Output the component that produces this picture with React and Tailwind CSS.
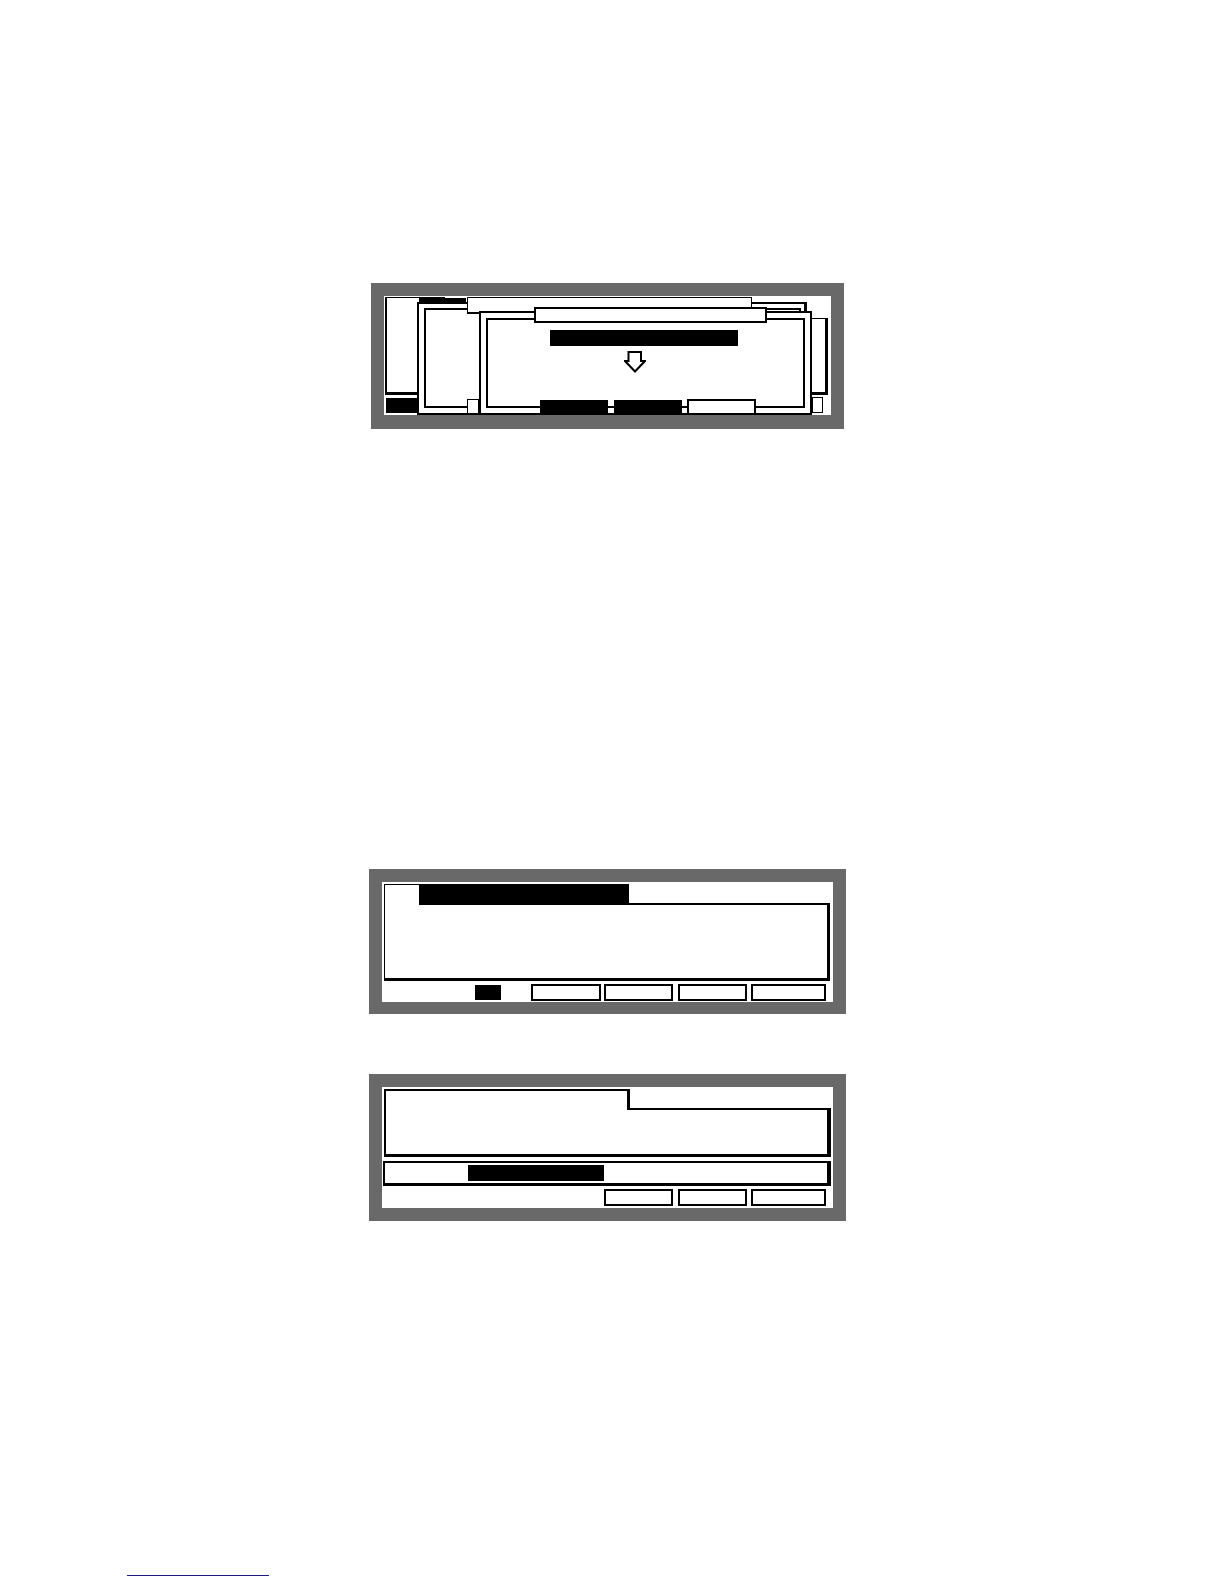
import React from "react";

// Outlined "down" arrow used in the transfer dialog
const DownArrow = () => (
  <svg width="22" height="22" viewBox="0 0 22 22" className="absolute left-[240px] top-[55px]">
    <path d="M4.5 1 H17 V10 H21 L11 20.5 L1 10 H4.5 Z" fill="white" stroke="black" strokeWidth="2" strokeLinejoin="miter" />
  </svg>
);

const StackScreen = () => (
  <div className="ml-[371px] mt-[283px] h-[146px] w-[473px] bg-[#696969] pl-[13px] pt-[13px]">
    <div className="relative h-[119px] w-[447px] overflow-hidden bg-white">
      {/* windows further back */}
      <div className="absolute left-[1px] top-[1px] h-[98px] w-[60px] border-l-2 border-t border-b-[3px] border-black bg-white" />
      <div className="absolute left-[35px] top-[2px] h-[4px] w-[47px] bg-black" />
      <div className="absolute left-[396px] top-[22px] h-[77px] w-[48px] border border-r-[3px] border-b-[3px] border-black bg-white" />
      <div className="absolute left-[2px] top-[102px] h-[15px] w-[31px] bg-black" />
      <div className="absolute left-[428px] top-[101px] h-[16px] w-[11px] border border-black bg-white" />

      {/* middle window */}
      <div className="absolute left-[33px] top-[6px] h-[113px] w-[390px] border-2 border-r-[3px] border-black bg-white">
        <div className="ml-[5px] mt-[4px] h-[100px] w-[377px] border-2 border-black" />
      </div>
      <div className="absolute left-[83px] top-[103px] h-[15px] w-[12px] border border-black bg-white" />
      <div className="absolute left-[83px] top-[1px] h-[17px] w-[285px] border border-b-2 border-black bg-white" />

      {/* front window */}
      <div className="absolute left-[95px] top-[15px] h-[104px] w-[333px] border-2 border-black bg-white">
        <div className="ml-[5px] mt-[5px] h-[90px] w-[319px] border-2 border-black" />
      </div>
      <div className="absolute left-[150px] top-[11px] h-[16px] w-[233px] border-2 border-black bg-white" />
      <div className="absolute left-[166px] top-[34px] h-[16px] w-[188px] bg-black" />
      <DownArrow />
      <div className="absolute left-[156px] top-[104px] h-[15px] w-[68px] bg-black" />
      <div className="absolute left-[230px] top-[104px] h-[15px] w-[68px] bg-black" />
      <div className="absolute left-[303px] top-[103px] h-[16px] w-[69px] border-2 border-black bg-white" />
    </div>
  </div>
);

const SoftKey = ({ w, ml }) => (
  <div className={`h-[17px] border-2 border-black bg-white ${w} ${ml}`} />
);

const TabScreen = () => (
  <div className="ml-[369px] mt-[440px] h-[145px] w-[477px] bg-[#696969] pl-[13px] pt-[13px]">
    <div className="h-[120px] w-[451px] bg-white pl-[2px] pt-[2px]">
      <div className="w-[446px]">
        <div className="flex h-[21px]">
          <div className="w-[35px] border-l border-t border-black" />
          <div className="w-[210px] bg-black" />
          <div className="flex-1 border-b-2 border-black" />
        </div>
        <div className="h-[76px] border-l border-r-[3px] border-b-[3px] border-black" />
      </div>
      <div className="mt-[3px] flex">
        <div className="ml-[91px] mt-[1px] h-[15px] w-[26px] bg-black" />
        <SoftKey w="w-[70px]" ml="ml-[30px]" />
        <SoftKey w="w-[69px]" ml="ml-[3px]" />
        <SoftKey w="w-[69px]" ml="ml-[5px]" />
        <SoftKey w="w-[75px]" ml="ml-[4px]" />
      </div>
    </div>
  </div>
);

const InputScreen = () => (
  <div className="ml-[369px] mt-[60px] h-[147px] w-[477px] bg-[#696969] pl-[13px] pt-[13px]">
    <div className="h-[121px] w-[451px] bg-white pl-[2px] pt-[2px]">
      <div className="w-[447px]">
        <div className="flex h-[21px]">
          <div className="w-[246px] border-l-2 border-t-2 border-r-[3px] border-black" />
          <div className="flex-1 border-b-2 border-black" />
        </div>
        <div className="h-[47px] border-l-2 border-r-4 border-b-[3px] border-black" />
      </div>
      <div className="-ml-px mt-[4px] h-[25px] w-[448px] border-2 border-r-4 border-b-[3px] border-black">
        <div className="ml-[83px] mt-[2px] h-[16px] w-[136px] bg-black" />
      </div>
      <div className="mt-[3px] flex">
        <SoftKey w="w-[69px]" ml="ml-[220px]" />
        <SoftKey w="w-[69px]" ml="ml-[5px]" />
        <SoftKey w="w-[75px]" ml="ml-[4px]" />
      </div>
    </div>
  </div>
);

export default function App() {
  return (
    <div className="flex h-[1584px] w-[1224px] flex-col bg-white font-['Liberation_Sans',sans-serif]">
      <StackScreen />
      <TabScreen />
      <InputScreen />
      <div className="ml-[127px] mt-[354px] h-px w-[142px] bg-[#1c1c84]" />
    </div>
  );
}
